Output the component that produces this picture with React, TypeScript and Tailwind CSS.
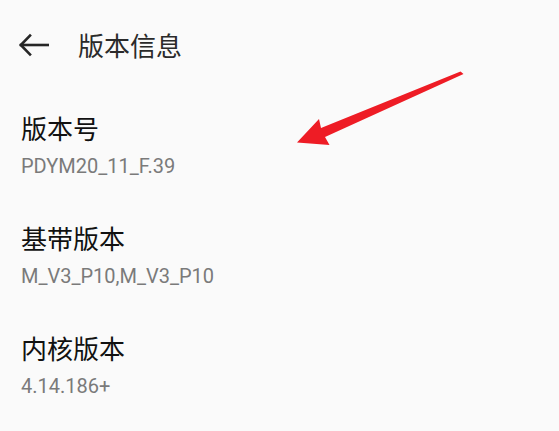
const items = [
  { title: "版本号", value: "PDYM20_11_F.39" },
  { title: "基带版本", value: "M_V3_P10,M_V3_P10" },
  { title: "内核版本", value: "4.14.186+" },
];

export default function App() {
  return (
    <div className="relative w-[559px] h-[431px] overflow-hidden bg-[#fafafa] font-['Roboto','Noto_Sans_CJK_SC',sans-serif]">
      {/* header */}
      <div className="flex h-[90px] items-center pl-[19px]">
        <svg width="30" height="24" viewBox="0 0 30 24" fill="none" stroke="#262626" strokeWidth="2.6" strokeLinecap="square">
          <path d="M2 12 H29" />
          <path d="M11 2.5 L1.8 12 L11 21.5" />
        </svg>
        <span className="ml-[29px] text-[26px] leading-[36px] text-[#2a2a2a] font-['Noto_Sans_CJK_SC',sans-serif]">
          版本信息
        </span>
      </div>

      {/* list */}
      <div className="flex flex-col">
        {items.map((it) => (
          <div key={it.title} className="pl-[21px] pt-5 pb-[22px]">
            <div className="text-[26px] leading-[36px] text-[#111] font-['Noto_Sans_CJK_SC',sans-serif]">
              {it.title}
            </div>
            <div className="mt-2 text-[20px] leading-[24px] text-[#7a7a7a]">{it.value}</div>
          </div>
        ))}
      </div>

      {/* annotation arrow */}
      <svg className="absolute left-0 top-0" width="559" height="431" viewBox="0 0 559 431">
        <path
          d="M460.5 71.5 L463.5 74 L325 137 L329.5 145 L297 142.5 L319 119 L321 128 Z"
          fill="#ee1c25"
        />
      </svg>
    </div>
  );
}
